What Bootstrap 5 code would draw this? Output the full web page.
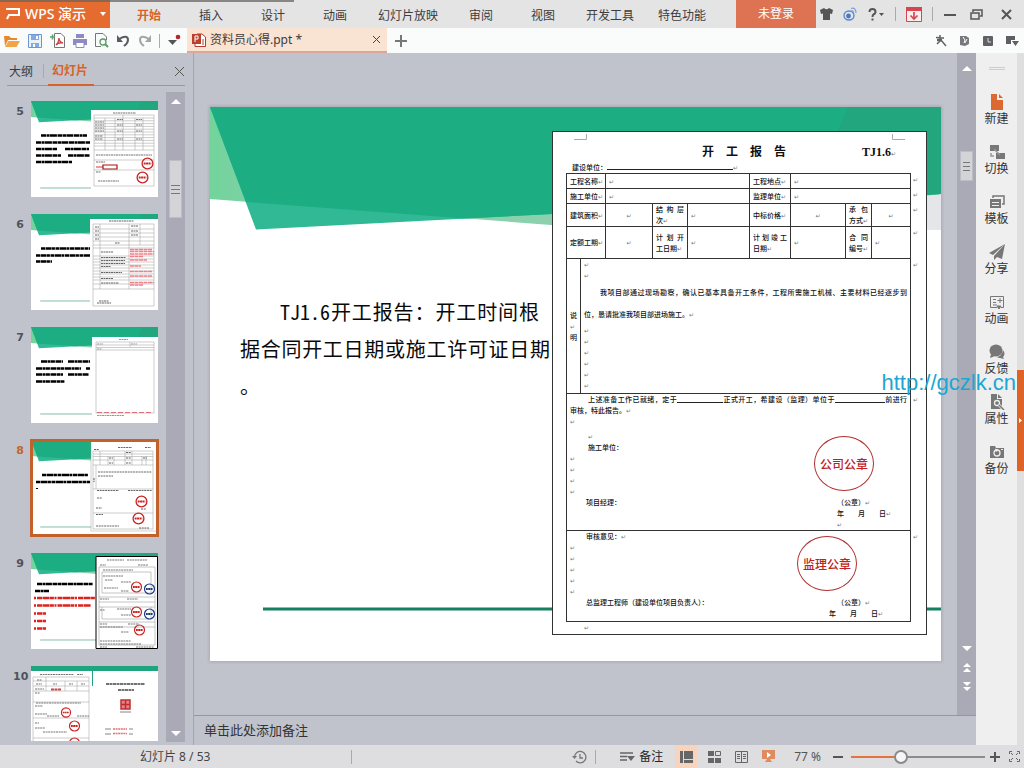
<!DOCTYPE html>
<html lang="zh-CN">
<head>
<meta charset="utf-8">
<meta name="viewport" content="width=device-width, initial-scale=1">
<title>资料员心得.ppt - WPS 演示</title>
<link href="https://cdn.jsdelivr.net/npm/bootstrap@5.3.0/dist/css/bootstrap.min.css" rel="stylesheet">
<style>
:root{--ui:#c0c3cc;--accent:#d8622a;--rail:#a9aab6;--ink:#3c3c3c}
body{font-family:"Noto Sans","Noto Sans CJK SC",sans-serif;font-size:12px;line-height:16px;color:var(--ink);background:var(--ui);overflow:hidden}
button{border:0;background:none;padding:0;color:inherit;font:inherit}
a{color:inherit;text-decoration:none}
svg{display:block;flex:none}
.titlebar{height:28px;background:#e4e4e5;position:relative}
.titlebar::before{content:"";position:absolute;left:0;top:0;width:294px;height:2px;background:#6b6560;opacity:.75}
.brand{width:110px;height:28px;background:#e66b2e;color:#fff;font-size:14px;font-weight:500}
.brand .cut{width:10px;margin-left:auto}
.menu a{min-width:62px;padding:0 12px;text-align:center;line-height:32px;height:28px}
.menu a.on{color:var(--accent);font-weight:700}
.login{width:80px;height:28px;background:#dd7352;color:#fff}
.wctl{color:#555;width:208px}
.vline{width:1px;height:14px;background:#aaa}
.toolbar{height:25px;background:#fafbfb}
.quick{width:187px;padding-left:4px}
.aux{gap:13px;padding-right:5px}
.doctab{width:200px;height:25px;background:#f9e3d3;border-bottom:2px solid #dca79b;padding:0 6px 0 5px}
.outline-pane{width:194px;border-right:1px solid #a3a5b0}
.outline-head{height:33px;margin:0 8px 0 7px;border-bottom:1px solid #9598a4}
.outline-head button{height:33px;padding-top:6px}
.outline-head .plain{padding:6px 6px 0 2px}
.outline-head .on{color:var(--accent);font-weight:600;border-bottom:2px solid var(--accent);padding-left:4px;padding-right:6px}
.thumbs{padding:15px 0 0 13px;gap:17px;overflow:hidden;margin-bottom:3px}
.thumbs li{display:flex;height:96px;flex:none}
.thumbs .no{width:18px;padding:3px 4px 0 0;text-align:center;font:bold 11px/16px "DejaVu Sans",sans-serif;color:#50525c}
.thumbs .on .no{color:#c2652b}
.thumbs .on svg{outline:3px solid #c2622a;outline-offset:-2px}
.rail{width:19px;background:var(--rail)}
.outline-pane .rail{margin:6px 8px 3px 0}
.grip{width:13px;background:#d3d4d8;border:1px solid #bcbdc5}
.grip.left{height:58px;margin-top:55px}
.grip.main{height:30px;margin-top:78px}
.stage{min-height:0}
.slide{width:731px;height:554px;background:#fff;position:relative;box-shadow:0 0 3px 1px #aba7b2;color:#000}
.slide>.bg{position:absolute;left:0;top:0}
.slide-body{position:relative;padding:24px 14px 26px 30px;height:100%}
.slide-text{flex:1;min-width:0;padding:162px 2px 0 0;font:20px/37px "Noto Sans CJK SC",sans-serif;font-feature-settings:"hwid";white-space:nowrap;color:#0a0a0a}
.slide-text p{margin:0;text-align-last:justify}
.slide-text .first{text-indent:2em;padding-right:11px}
.slide-text .tail{text-align-last:left}
.paper{width:375px;height:504px;background:#fff;border:1px solid #333;padding:12px 4px 0 13px;position:relative;font:7px/11px "Noto Sans CJK SC",sans-serif;font-weight:500;color:#111}
.paper .corner{position:absolute;top:2px;left:21px}
.paper .heading{font-size:12px;line-height:14px;font-weight:700;padding-left:136px;margin-bottom:2px}
.paper .code{font:bold 12px/14px "Liberation Serif",serif;margin-left:76px}
.paper .owner{padding-left:6px;line-height:12px}
.blank{display:inline-block;border-bottom:1px solid #222;height:9px;vertical-align:top}
.blank.w1{width:126px}.blank.w2{width:46px}.blank.w3{width:50px}
.paper i{font:6px/9px "DejaVu Sans",sans-serif;color:#777}
.form-grid{table-layout:fixed;width:356px;border-collapse:collapse}
.form-grid td{border:1px solid #333;padding:0 3px;vertical-align:middle;overflow:hidden;white-space:nowrap}
.form-grid td.end{border:0;vertical-align:top;padding:0 2px}
.form-grid td.mid{text-align:center}
.form-grid .wide{display:block;text-align-last:justify}
.form-grid .r1{height:15px}.form-grid .r2{height:23px}.form-grid .r3{height:32px}.form-grid .r4{height:135px}.form-grid .r5{height:136px}.form-grid .r6{height:91px}
.form-grid .top{vertical-align:top}
.row22{line-height:22px}
.in{padding-left:18px}
.sig{display:flex;justify-content:space-between;padding-left:16px}
.sig span:last-child{width:70px}
.stamp{position:absolute;width:60px;height:55px;border:1px solid #b03030;border-radius:50%;color:#c02020;font-size:12px;line-height:53px;text-align:center}
.stamp.a{left:261px;top:304px}
.stamp.b{left:244px;top:404px}
.notes{height:30px;border-top:1px solid #9497a3;padding-left:10px;font-size:13px;line-height:28px}
.notes input{background:none;border:0;padding:0;width:100%;color:#333;outline:0}
.notes input::placeholder{color:#333;opacity:1}
.side{width:41px;background:#efeff0}
.side button{height:50px;width:41px;color:#777}
.side span{color:#333;display:block;line-height:18px}
.side svg{margin:0 auto}
.handle{width:16px;height:3px;border-top:1px solid #c9cdd6;border-bottom:1px solid #c9cdd6;margin:14px auto 16px}
.edge{width:7px;background:#dfdfe0;padding-top:317px}
.edge button{width:7px;height:101px;background:#dd6426}
.statusbar{height:23px;background:#dedee0;color:#555}
.statusbar .page{padding-left:140px;width:351px;color:#444}
.view{width:27px;height:23px;display:flex;align-items:center;justify-content:center}
.view.on{width:22px;background:#f8d3bd}
.zoom-range{appearance:none;-webkit-appearance:none;width:134px;height:14px;margin:0;background:linear-gradient(90deg,#e5743c 0 37%,#8c8c90 37%) center/100% 2px no-repeat}
.zoom-range::-webkit-slider-thumb{-webkit-appearance:none;width:14px;height:14px;border-radius:50%;background:#f6f6f6;border:2px solid #8a8a8a}
.watermark{position:absolute;z-index:5;right:8px;top:370px;font:22px/26px "Liberation Sans",sans-serif;color:#1ba6d3}
</style>
</head>
<body>
<svg width="0" height="0" class="position-absolute" aria-hidden="true">
 <defs>
  <linearGradient id="mint" x2="1"><stop stop-color="#72d49b"/><stop offset=".12" stop-color="#8aceb0"/><stop offset="1" stop-color="#8fd5a8"/></linearGradient>
  <symbol id="ribbon" viewBox="0 0 731 554" preserveAspectRatio="none">
   <path fill="#fff" d="M0 0H731V554H0z"/><path fill="#e4e6ea" d="M640 0H731V123L640 122z"/>
   <path fill="url(#mint)" d="M0 0H731V87L420 124 0 92z"/>
   <path fill="#30b994" d="M0 0 46 122.500 342 107 731 87V0z"/>
   <path fill="#1cae82" d="M0 0 36 95 254 111.600 731 87V0z"/>
   <path fill="#21a67d" d="M638 0 600 94 731 87V0z"/>
   <path stroke="#168062" stroke-width="3" d="M53 502H731"/>
  </symbol>
  <symbol id="seal" viewBox="0 0 12 12"><circle cx="6" cy="6" r="5" fill="none" stroke="currentColor" stroke-width="1.200"/><path d="M2.500 6H9.500" stroke="currentColor" stroke-width="1.800" stroke-dasharray="1.800 .4"/></symbol>
 </defs>
</svg>
<div class="vh-100 d-flex flex-column position-relative">
<header class="titlebar d-flex align-items-center">
 <button class="brand d-flex align-items-center ps-1" aria-label="WPS 演示"><svg class="ms-0 me-1" width="17" height="14" viewBox="0 0 17 14" fill="none" stroke="#fff" stroke-width="2"><path d="M2 2H15V8H5L3 12"/></svg><span>WPS 演示</span><span class="cut"><svg width="6" height="4" viewBox="0 0 6 4"><path fill="#fff" d="M0 0H6L3 4z"/></svg></span></button>
 <nav class="menu d-flex ms-2 me-auto" aria-label="功能区">
  <a class="on" href="#">开始</a><a href="#">插入</a><a href="#">设计</a><a href="#">动画</a><a href="#">幻灯片放映</a><a href="#">审阅</a><a href="#">视图</a><a href="#">开发工具</a><a href="#">特色功能</a>
 </nav>
 <button class="login">未登录</button>
 <div class="wctl d-flex align-items-center justify-content-between px-1 flex-shrink-0">
  <button aria-label="皮肤"><svg width="13" height="12" viewBox="0 0 13 12"><path fill="#555" d="M0 2 4 0Q6.500 2.500 9 0L13 2 12 6 10 5.500V12H3V5.500L1 6z"/></svg></button>
  <button aria-label="微博"><svg width="14" height="14" viewBox="0 0 14 14"><ellipse cx="6" cy="8.500" rx="5" ry="4.500" fill="none" stroke="#5b89c9" stroke-width="1.400"/><circle cx="5.500" cy="9" r="2.400" fill="#4478c4"/><path d="M8 1.500Q13 0 13 6M8 4Q10.500 3 10.500 6" fill="none" stroke="#7a9fd4" stroke-width="1.200"/></svg></button>
  <button aria-label="帮助"><svg width="17" height="13" viewBox="0 0 17 13"><path d="M1.500 4Q1.500 1 4.500 1T7.500 4Q7.500 5.500 5.500 6.500 4.500 7 4.500 9M4.500 10.500V12.500" fill="none" stroke="#555" stroke-width="2"/><path fill="#555" d="M11 5H16L13.500 8z"/></svg></button>
  <span class="vline"></span>
  <button aria-label="下载"><svg width="16" height="15" viewBox="0 0 16 15"><path fill="#fbeeee" stroke="#d64550" d="M.5.5H15.500V14.500H.5z"/><path fill="#d64550" d="M0 0H16V4H0z"/><path d="M8 5V12M4.500 8.500 8 12 11.500 8.500" fill="none" stroke="#d64550" stroke-width="1.700"/></svg></button>
  <span class="vline"></span>
  <button aria-label="最小化"><svg width="12" height="12"><path fill="#555" d="M0 6H12V8H0z"/></svg></button>
  <button aria-label="还原" class="ms-1"><svg width="13" height="11" viewBox="0 0 13 11" fill="none" stroke="#555"><path stroke-width="1.500" d="M3 3V1H12V7H10M1 4H9V10H1z"/></svg></button>
  <button aria-label="关闭" class="ms-2 pe-2"><svg width="11" height="11"><path stroke="#555" stroke-width="2" d="M1 1 10 10M10 1 1 10"/></svg></button>
 </div>
</header>

<div class="toolbar d-flex align-items-center">
 <div class="quick d-flex align-items-center gap-2 flex-shrink-0">
  <button aria-label="打开"><svg width="16" height="14" viewBox="0 0 16 14"><path fill="#e88a2c" d="M0 2H5L7 4H13V6H4L1 12z"/><path fill="#f2a448" d="M4.500 7H16L12.500 13H1z"/></svg></button>
  <button aria-label="保存"><svg width="14" height="14" viewBox="0 0 14 14"><path fill="#eaf2fc" stroke="#6b98d4" d="M.5.5H13.500V13.500H.5z"/><path fill="#82abe0" d="M3 1H11V6H3zM3 9H11V13H3z"/><path fill="#fff" d="M8 2H10V5H8zM5 10H7V13H5z"/></svg></button>
  <button aria-label="输出为PDF"><svg width="15" height="15" viewBox="0 0 15 15"><path fill="#fff" stroke="#777" d="M4.500.5H11L14.500 4V14.500H4.500z"/><path d="M6 12Q9 9 9 5 9 9 13 10 9 9 6 12" fill="none" stroke="#cc4343" stroke-width="1.300"/><path d="M0 4H5M2.500 1.500V6.500" stroke="#5ba36a" stroke-width="1.500"/></svg></button>
  <button aria-label="打印"><svg width="14" height="14" viewBox="0 0 14 14"><path fill="#8d8bc2" d="M3 0H11V4H3zM0 5H14V11H0z"/><path fill="#fff" stroke="#8d8bc2" d="M3 8.500H11V13.500H3z"/></svg></button>
  <button aria-label="打印预览"><svg width="14" height="15" viewBox="0 0 14 15" fill="none"><path stroke="#777" d="M6 13.500H.5V.5H8L11.500 4V7"/><circle cx="8" cy="9" r="3" stroke="#5a9c63" stroke-width="1.300"/><path stroke="#5a9c63" stroke-width="2" d="M10 11 13 14"/></svg></button>
  <button aria-label="撤销"><svg width="13" height="13" viewBox="0 0 13 13"><path fill="none" stroke="#5c5c60" stroke-width="2" d="M2 5Q11 0 11 6 11 9 7 12"/><path fill="#5c5c60" d="M0 1V8H6z"/></svg></button>
  <button aria-label="恢复"><svg width="13" height="13" viewBox="0 0 13 13"><path fill="none" stroke="#a5a5a8" stroke-width="2" d="M11 5Q2 0 2 6 2 9 6 12"/><path fill="#a5a5a8" d="M13 1V8H7z"/></svg></button>
  <span class="vline"></span>
  <button aria-label="更多"><svg width="13" height="14" viewBox="0 0 13 14"><path fill="#555" d="M0 6H9L4.500 11z"/><circle cx="10" cy="3" r="2.300" fill="#b3262b"/></svg></button>
 </div>
 <div class="doctab d-flex align-items-center flex-shrink-0">
  <svg class="me-1" width="14" height="14" viewBox="0 0 14 14"><path fill="#fff" stroke="#b23a2c" d="M5 1H10L13.500 4V13.500H3V11"/><path fill="#b9402f" d="M0 1H9V11H0z"/><path d="M3 9V3H6V6H3M11 6V12" fill="none" stroke="#fff"/><path stroke="#b9402f" d="M11 6V12"/></svg>
  <span>资料员心得.ppt *</span>
  <button class="ms-auto" aria-label="关闭文档"><svg width="9" height="9"><path stroke="#444" d="M1 1 8 8M8 1 1 8"/></svg></button>
 </div>
 <button class="ms-2 me-auto" aria-label="新建标签"><svg width="12" height="12"><path stroke="#777" stroke-width="2" d="M0 6H12M6 0V12"/></svg></button>
 <div class="aux d-flex align-items-center">
  <button aria-label="查找"><svg width="12" height="12" viewBox="0 0 12 12" stroke="#626266" fill="none"><path stroke-width="1.500" d="M5 0V6M1 2.500 9 3M2 9 6 5 11 11"/><path stroke-width="2.500" d="M2 5H7"/></svg></button>
  <button aria-label="文档助手"><svg width="10" height="12" viewBox="0 0 10 12"><path fill="#77777c" d="M0 1H6L9 3V9L5 11 0 10z"/><path stroke="#fff" fill="none" d="M3 2 5 5 4 8M7 4 5 8"/></svg></button>
  <button aria-label="历史"><svg width="10" height="10" viewBox="0 0 10 10"><rect width="10" height="10" rx="1" fill="#606066"/><path stroke="#ddd" fill="none" d="M5 2V6H8"/></svg></button>
  <button aria-label="选项"><svg width="13" height="12" viewBox="0 0 13 12"><path fill="#5e5e63" d="M0 1H9V5H5V9H0z"/><path fill="#5e5e63" d="M6 6H13L9.500 11z"/></svg></button>
 </div>
</div>

<main class="d-flex flex-grow-1 stage">
 <aside class="outline-pane d-flex flex-column flex-shrink-0">
  <div class="outline-head d-flex align-items-center">
   <button class="plain">大纲</button><span class="vline mt-1 mx-1"></span><button class="on">幻灯片</button>
   <button class="ms-auto" aria-label="关闭窗格"><svg width="10" height="10"><path stroke="#555" d="M0 0 9 9M9 0 0 9"/></svg></button>
  </div>
  <div class="d-flex flex-grow-1 stage">
   <ol class="thumbs list-unstyled d-flex flex-column flex-grow-1 mb-1">
    <li><span class="no">5</span><svg width="127" height="96" viewBox="0 0 127 96"><use href="#ribbon" width="127" height="96"/><path fill="#fff" d="M60 9H127V96H60z"/>
     <g stroke="#000" stroke-width="2.400" stroke-dasharray="5 .5 3 .4 7 .6"><path d="M10 34.500H56M5 41.500H59M5 48H26M34 48H58M5 54.500H30M37 54.500H59M5 61H41"/></g>
     <g stroke="#999" stroke-width=".5" fill="none"><path d="M63 14H123V85H63zM63 17H123M63 19.800H123M63 22.600H123M63 25.400H123M63 28.200H123M63 31H123M63 33.800H123M63 36.600H123M63 39.400H123M63 42.200H123M63 45H123M63 49H123M63 59H123M63 69H123M74 17V49M84 17V49M92 14V49M104 17V49M112 17V49"/></g>
     <g stroke="#777" stroke-width="1.200" stroke-dasharray="2 .5"><path d="M82 12H105M65 54H121M65 61H74M65 71H70M67 80H88M64 21H73M64 24H73M64 27H73M64 30H73M64 35H72M64 38H72M86 18.500H92M86 24H92M86 30H92M86 38H92M105 18.500H111M105 24H111M105 30H111M105 38H111"/></g><path d="M65 66H72" stroke="#d33"/><path fill="none" stroke="#a11" stroke-width="1.200" d="M72 64H86V68H72z"/>
     <g color="#c22"><use href="#seal" x="110" y="56" width="13" height="13"/><use href="#seal" x="105" y="70" width="13" height="13"/></g></svg></li>
    <li><span class="no">6</span><svg width="127" height="96" viewBox="0 0 127 96"><use href="#ribbon" width="127" height="96"/><path fill="#fff" d="M59 5H127V96H59z"/>
     <g stroke="#000" stroke-width="2.400" stroke-dasharray="4 .5 6 .4 3 .6"><path d="M10 34.500H59M5 41.500H59M5 47.500H21"/></g>
     <g stroke="#999" stroke-width=".5" fill="none"><path d="M62 10H123V92H62zM62 15H123M62 19H123M62 23H123M62 27H123M62 31H123M62 34H123M62 42H123M62 45H123M62 48H123M62 51H123M62 54H123M62 57H123M62 60H123M62 63H123M62 66H123M62 70H123M62 75H123M69 10V75M98 10V75M109 10V31"/></g>
     <g stroke="#666" stroke-width="1.100" stroke-dasharray="2 .5"><path d="M78 7H103M64 13H68M64 17H68M64 21H68M64 25H68M100 12H107M100 17H107M100 21H107M84 29H89M70 38H82M70 43.500H95M70 46.500H94M70 49.500H94M70 52.500H80M70 58.500H91M70 64.500H82M70 69H88M68 87H78M66 89H80"/></g>
     <g stroke="#f08088" stroke-width="1.400" stroke-dasharray="4 .5"><path d="M99 35.500H121M99 37.500H123M99 40H123M99 42.500H112M99 46H116M99 52H110M99 57.500H121M99 62H121M99 68.500H123M99 71H112"/></g></svg></li>
    <li><span class="no">7</span><svg width="127" height="96" viewBox="0 0 127 96"><use href="#ribbon" width="127" height="96"/><path fill="#fff" d="M61 10H127V96H61z"/>
     <g stroke="#000" stroke-width="2.400" stroke-dasharray="6 .5 3 .4 4 .6"><path d="M10 34.500H32M37 34.500H59M5 41.500H50M55 41.500H59M5 47.500H32M37 47.500H58M5 54.500H34"/></g>
     <g stroke="#999" stroke-width=".5" fill="none"><path d="M65 15H123V86H65zM65 18H123M65 20.500H123M65 23H123M99 15V20"/></g><path d="M88 12.500H97M66 17H72M100 17H106M66 22H71M66 88.500H93" stroke="#999" stroke-dasharray="2 .5"/><path d="M66 85.500H122" stroke="#e07078" stroke-dasharray="5 2"/></svg></li>
    <li class="on"><span class="no">8</span><svg width="127" height="96" viewBox="0 0 127 96"><use href="#ribbon" width="127" height="96"/><path fill="#fff" stroke="#888" stroke-width=".4" d="M60 1H126V91H60z"/>
     <g stroke="#000" stroke-width="2.400" stroke-dasharray="4 .5 7 .4 3 .6"><path d="M11 35H57M5 42H59"/></g><path d="M5 48.500H7" stroke="#000"/>
     <g stroke="#999" stroke-width=".5" fill="none"><path d="M62 11H122V89H62zM62 14H122M62 16.500H122M62 20H122M62 25H122M65 25V49M62 49H122M62 73H122M69 11V25M77 16V25M83 16V25M94 11V25M101 11V25M111 16V25M115 16V25"/></g>
     <g stroke="#666" stroke-width="1.100" stroke-dasharray="2 .7"><path d="M87 7.500H101M114 7.500H120M63 9.500H68M95 12.500H100M78 18H82M95 18H100M112 18H116M78 23H82M95 23H100M67 32H121M67 36H82M63 38V42M66 50.500H88M97 50.500H121M66 58H71M65 68H71M110 69H115M65 74.500H72M65 86H88M108 88H118"/></g>
     <g color="#c22"><use href="#seal" x="104" y="55" width="13" height="13"/><use href="#seal" x="101" y="72" width="13" height="13"/></g></svg></li>
    <li><span class="no">9</span><svg width="127" height="96" viewBox="0 0 127 96"><use href="#ribbon" width="127" height="96"/><path fill="#fff" stroke="#000" d="M65 3.500H126.500V95.500H65z"/>
     <g stroke="#000" stroke-width="2.400" stroke-dasharray="5 .5 3 .4 6 .6"><path d="M6 31H62M4 38H18"/></g>
     <g stroke="#e0201c" stroke-width="2.400" stroke-dasharray="2 1 5 .5 7 .4 4 .6"><path d="M3 45H64M3 52.500H60M3 60.500H15M3 68H15M3 75.500H15"/></g>
     <g stroke="#888" stroke-width=".5" fill="none"><path d="M68 14H124V92H68zM71 19H120V40H71zM68 44H124M68 49H124M68 54H124M68 69H124M68 74H124M71 54V66H120V54"/></g>
     <g stroke="#777" stroke-width="1.100" stroke-dasharray="2 .6"><path d="M76 7H93M96 7H116M69 12H75M107 12H117M72 17H102M72 23H92M74 27H82M90 29H100M73 35H87M90 38H98M69 46H78M96 46H107M86 56H100M69 57H74M90 62H100M69 71H76M97 71H108M69 74H92M90 79H98M69 88H100M69 91H110M69 94H76M105 94H123"/></g>
     <g color="#c22"><use href="#seal" x="99" y="28" width="13" height="12"/><use href="#seal" x="99" y="53" width="13" height="12"/><use href="#seal" x="102" y="71" width="13" height="12"/></g><g color="#1c3a80"><use href="#seal" x="112" y="30" width="13" height="12"/><use href="#seal" x="112" y="55" width="13" height="12"/></g></svg></li>
    <li><span class="no">10</span><svg width="127" height="96" viewBox="0 0 127 96"><path fill="#fff" d="M0 0H127V96H0z"/><path fill="#1fa57d" d="M0 0H127V5H0zM61 5H62V20H61z"/>
     <g stroke="#999" stroke-width=".5" fill="none"><path d="M2 11H58V96H2zM2 15H58M2 20H58M2 25H58M2 36H58M2 52H58M2 72H58M15 11V25M34 15V25M46 15V25"/></g>
     <g stroke="#777" stroke-width="1.100" stroke-dasharray="2 .6"><path d="M9 8.500H43M46 8.500H52M6 14H11M5 18H11M22 18H26M38 18H42M50 18H54M4 23H13M4 27H9M5 37H50M4 40H12M4 48H16M16 50H28M46 50H58M4 57H8M4 62H14M12 66H36"/></g><path d="M20 23.500H30" stroke="#c44" stroke-width="2" stroke-dasharray="3 .5"/>
     <path d="M75 18H114M87 24H103" stroke="#444" stroke-width="1.600" stroke-dasharray="3 .5"/><path fill="#e08488" stroke="#c02c30" stroke-width="1.500" d="M90 34H99V43H90zM90 38.500H99M94.500 34V43"/><path d="M89 46H100M74 63H80M98 63H102M74 68H80M98 68H102" stroke="#666" stroke-width=".8"/><path d="M82 63H96M82 67.500H96" stroke="#e07078" stroke-width="1.500" stroke-dasharray="2 .6"/>
     <g color="#c22"><use href="#seal" x="28" y="41" width="14" height="11"/><use href="#seal" x="37" y="54" width="13" height="12"/><use href="#seal" x="37" y="71" width="13" height="12"/></g></svg></li>
   </ol>
   <div class="rail d-flex flex-column align-items-center flex-shrink-0"><svg class="mt-1" width="10" height="9"><path fill="#fff" d="M0 8H10L5 3z"/></svg><div class="grip left d-flex align-items-center justify-content-center"><svg width="9" height="9"><path stroke="#777" d="M0 .5H9M0 4.500H9M0 8.500H9"/></svg></div><svg class="mt-auto mb-1" width="10" height="9"><path fill="#fff" d="M0 2H10L5 7z"/></svg></div>
  </div>
 </aside>

 <section class="d-flex flex-column flex-grow-1 stage overflow-hidden">
  <div class="d-flex flex-grow-1 stage">
   <div class="d-flex flex-grow-1 align-items-center justify-content-center overflow-hidden">
    <article class="slide flex-shrink-0">
     <svg class="bg" width="731" height="554"><use href="#ribbon" width="731" height="554"/></svg>
     <div class="slide-body d-flex">
      <div class="slide-text"><p class="first">TJ1.6开工报告：开工时间根</p><p>据合同开工日期或施工许可证日期</p><p class="tail">。</p></div>
      <div class="paper">
       <svg class="corner" width="332" height="6" fill="none" stroke="#aaa"><path d="M0 5.500H12.500V0M331 5.500H318.500V0"/></svg>
       <div class="heading">开　工　报　告<span class="code">TJ1.6<i>↵</i></span></div>
       <div class="owner">建设单位：<span class="blank w1"></span><i>↵</i></div>
       <table class="form-grid">
        <colgroup><col style="width:14px"><col style="width:25px"><col style="width:47px"><col style="width:35px"><col style="width:62px"><col style="width:41px"><col style="width:55px"><col style="width:26px"><col style="width:39px"><col></colgroup>
        <tr class="r1"><td colspan="2">工程名称<i>↵</i></td><td colspan="3"><i>↵</i></td><td>工程地点<i>↵</i></td><td colspan="3"><i>↵</i></td><td class="end"><i>↵</i></td></tr>
        <tr class="r1"><td colspan="2">施工单位<i>↵</i></td><td colspan="3"><i>↵</i></td><td>监理单位<i>↵</i></td><td colspan="3"><i>↵</i></td><td class="end"><i>↵</i></td></tr>
        <tr class="r2"><td colspan="2">建筑面积<i>↵</i></td><td class="mid"><i>↵</i></td><td><span class="wide">结构层</span>次<i>↵</i></td><td><i>↵</i></td><td>中标价格<i>↵</i></td><td class="mid"><i>↵</i></td><td><span class="wide">承包</span>方式<i>↵</i></td><td class="mid"><i>↵</i></td><td class="end"><i>↵</i></td></tr>
        <tr class="r3"><td colspan="2">定额工期<i>↵</i></td><td class="mid"><i>↵</i></td><td><span class="wide">计划开</span>工日期<i>↵</i></td><td><i>↵</i></td><td><span class="wide">计划竣工</span>日期<i>↵</i></td><td><i>↵</i></td><td><span class="wide">合同</span>编号<i>↵</i></td><td><i>↵</i></td><td class="end"><i>↵</i></td></tr>
        <tr class="r4"><td>说<br><i>↵</i><br>明</td><td colspan="8" class="top"><i>↵</i><br><i>↵</i><div class="row22"><span class="wide ms-3">我项目部通过现场勘察，确认已基本具备开工条件，工程所需施工机械、主要材料已经逐步到</span>位，恳请批准我项目部进场施工。<i>↵</i></div><i>↵</i><br><i>↵</i><br><i>↵</i><br><i>↵</i><br><i>↵</i><br><i>↵</i></td><td class="end"><i>↵</i></td></tr>
        <tr class="r5"><td colspan="9" class="top"><span class="wide in">上述准备工作已就绪，定于<span class="blank w2"></span>正式开工，希建设（监理）单位于<span class="blank w3"></span>前进行</span>审核，特此报告。<i>↵</i><br><i>↵</i><div class="in pt-1"><i>↵</i></div><div class="in">施工单位：</div><i>↵</i><br><i>↵</i><br><i>↵</i><br><i>↵</i><div class="sig"><span>项目经理：</span><span>（公章）<i>↵</i></span></div><div class="sig"><span></span><span>年　　月　　日<i>↵</i></span></div><div class="sig"><span></span><span><i>↵</i></span></div></td><td class="end"><i>↵</i></td></tr>
        <tr class="r6"><td colspan="9" class="top"><div class="sig"><span>审核意见：<i>↵</i></span><span></span></div><i>↵</i><br><i>↵</i><br><i>↵</i><br><i>↵</i><br><i>↵</i><div class="sig"><span>总监理工程师（建设单位项目负责人）：</span><span>（公章）<i>↵</i></span></div><div class="sig"><span></span><span class="pe-3 me-2">年　　月　　日<i>↵</i></span></div></td><td class="end"><i>↵</i></td></tr>
       </table>
       <div class="in"><i>↵</i></div>
       <div class="stamp a">公司公章</div><div class="stamp b">监理公章</div>
      </div>
     </div>
    </article>
   </div>
   <div class="rail d-flex flex-column align-items-center flex-shrink-0"><svg class="mt-2" width="10" height="12"><path fill="#fff" d="M0 10H10L5 5z"/></svg><div class="grip main d-flex align-items-center justify-content-center"><svg width="7" height="9"><path stroke="#777" d="M0 .5H7M0 4.500H7M0 8.500H7"/></svg></div>
    <svg class="mt-auto mb-3" width="10" height="56" viewBox="0 0 10 56" fill="#fff"><path d="M0 3H10L5 8zM1 24H9L5 20zM1 29H9L5 25zM1 39H9L5 43zM1 44H9L5 48z"/></svg></div>
  </div>
  <div class="notes"><input type="text" aria-label="备注" placeholder="单击此处添加备注"></div>
 </section>

 <nav class="side flex-shrink-0" aria-label="任务窗格">
  <div class="handle"></div>
  <button><svg width="16" height="16" viewBox="0 0 16 16"><path fill="#dc6a30" d="M2 0H8V6H14V16H2zM10 0 14 4H10z"/></svg><span>新建</span></button>
  <button><svg width="16" height="16" viewBox="0 0 16 16" fill="#777"><path d="M1 1H10V7H1zM7 9H16V15H7z"/><path d="M2 9V12H5M5 5 11 11" stroke="#999" fill="none" stroke-width="1.500"/></svg><span>切换</span></button>
  <button><svg width="16" height="16" viewBox="0 0 16 16"><path fill="none" stroke="#777" stroke-width="1.500" d="M4 4V2H15V10H13"/><path fill="#777" d="M1 5H12V14H1z"/><path stroke="#eee" d="M3 8.500H10M3 11.500H10"/></svg><span>模板</span></button>
  <button><svg width="16" height="16" viewBox="0 0 16 16" fill="#777"><path d="M16 0 0 9 4 11zM16 0 5 12V16L8 13 13 15z"/></svg><span>分享</span></button>
  <button><svg width="16" height="16" viewBox="0 0 16 16" fill="none" stroke="#777"><path d="M8 13.500H1.500V2.500H14.500V13.500H12M4 5.500H7M4 8.500H7M4 11H8M11 4V9M8.500 6.500H13.500"/><path fill="#777" d="M8 12H12L10 15z"/></svg><span>动画</span></button>
  <button><svg width="16" height="16" viewBox="0 0 16 16" fill="#777"><ellipse cx="7" cy="6.500" rx="6.500" ry="6"/><path d="M2 10 1 14 6 12zM14 6Q17 10 14 13L15 15 11 14Q9 14 8 13 13 12 14 6"/></svg><span>反馈</span></button>
  <button><svg width="16" height="16" viewBox="0 0 16 16"><path fill="#777" d="M2 0H8V5H13V15H2zM9 0 13 4H9z"/><circle cx="8" cy="9" r="2.500" fill="none" stroke="#eee" stroke-width="1.300"/><path stroke="#eee" stroke-width="3" d="M10 11 14 15"/><path stroke="#777" stroke-width="1.500" d="M10 11 15 16"/></svg><span>属性</span></button>
  <button><svg width="16" height="16" viewBox="0 0 16 16"><path fill="#777" d="M1 2H6L7 4H15V14H1z"/><circle cx="8" cy="9" r="3" fill="none" stroke="#eee" stroke-width="1.300"/><path fill="#eee" d="M6 4.500 10 6 7 8zM12 5H14V6H12z"/></svg><span>备份</span></button>
 </nav>
 <div class="edge flex-shrink-0"><button aria-label="展开"><svg width="7" height="7"><path fill="#fff" d="M2 1V6L5 3.500z"/></svg></button></div>
</main>

<footer class="statusbar d-flex align-items-center">
 <span class="page">幻灯片 8 / 53</span><span class="vline"></span>
 <button class="ms-auto me-2" aria-label="历史版本"><svg width="15" height="14" viewBox="0 0 15 14" fill="none" stroke="#777" stroke-width="1.300"><path d="M2.500 7A5.700 5.700 0 1 1 4 11M8 4V8H11"/><path fill="#777" stroke="none" d="M0 6H5L2.500 9z"/></svg></button>
 <span class="vline me-4"></span>
 <button class="d-flex align-items-center me-2"><svg class="me-1" width="15" height="12" viewBox="0 0 15 12"><path stroke="#666" stroke-width="1.300" d="M0 2H13M0 5.500H7M0 9H7"/><path fill="#666" d="M7 5H15L11 10z"/></svg><span class="text-dark">备注</span></button>
 <button class="view on ms-1" aria-label="普通视图"><svg width="13" height="12" fill="#666"><path d="M0 0H3V12H0zM4 0H13V8H4zM4 9H13V12H4z"/></svg></button>
 <button class="view ms-1" aria-label="浏览视图"><svg width="13" height="12" fill="#666"><path d="M0 0H6V5H0zM0 7H6V12H0zM7 7H13V12H7z"/><path fill="none" stroke="#666" d="M7.500.5H12.500V4.500H7.500z"/></svg></button>
 <button class="view" aria-label="阅读视图"><svg width="13" height="12" fill="none" stroke="#666"><path d="M.5.5H12.500V11.500H.5zM6.500 1V12M2 3.500H5M2 5.500H5M2 7.500H5M8 3.500H11M8 5.500H11M8 7.500H11"/></svg></button>
 <button class="view" aria-label="放映"><svg width="13" height="13" fill="#e08a5f"><path d="M0 0H13V9H8L10 12H3L5 9H0z"/><path fill="#fff" d="M5 2V8L9 5z"/></svg></button>
 <label class="ms-2 ps-1 me-2 pe-1 text-nowrap" for="zoom">77 %</label>
 <button class="me-2" aria-label="缩小"><svg width="10" height="10"><path fill="#555" d="M0 4H10V6H0z"/></svg></button>
 <input class="zoom-range" id="zoom" type="range" min="0" max="100" value="36">
 <button class="ms-1 me-2 ps-0" aria-label="放大"><svg width="12" height="10"><path stroke="#555" stroke-width="2" d="M1 5H11M6 0V10"/></svg></button>
 <button class="me-1" aria-label="适应窗口"><svg width="11" height="11" viewBox="0 0 11 11" fill="none" stroke="#666"><path d="M.5 3V.5H3M8 .5H10.500V3M.5 8V10.500H3M8 10.500H10.500V8M2 2 4 4M9 2 7 4M2 9 4 7M9 9 7 7"/></svg></button>
</footer>
<div class="watermark">http://gczlk.cn</div>
</div>
<script src="https://cdn.jsdelivr.net/npm/bootstrap@5.3.0/dist/js/bootstrap.bundle.min.js"></script>
</body>
</html>
